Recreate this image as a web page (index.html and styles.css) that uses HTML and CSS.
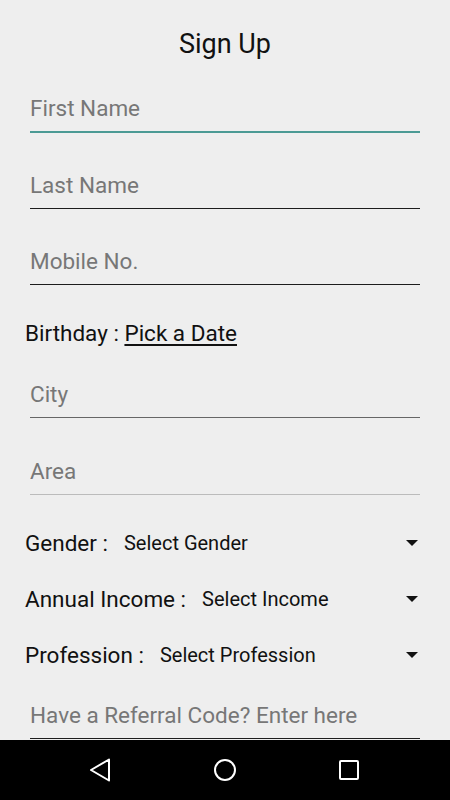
FILE: index.html
```html
<!DOCTYPE html>
<html lang="en">
<head>
  <meta charset="UTF-8">
  <title>Sign Up</title>
  <link rel="stylesheet" href="styles.css">
</head>
<body>

<div class="screen">
  <form class="form" id="signupForm">
    <h2 class="title">Sign Up</h2>

    <input type="text" class="field field-active" placeholder="First Name">
    <input type="text" class="field" placeholder="Last Name">
    <input type="tel" class="field" placeholder="Mobile No.">

    <div class="birthday">
      Birthday : <a href="#" class="date-link">Pick a Date</a>
    </div>

    <input type="text" class="field field-city" placeholder="City">
    <input type="text" class="field field-area" placeholder="Area">

    <div class="spinner-row">
      <span class="spinner-label">Gender :</span>
      <span class="spinner-value">Select Gender</span>
      <span class="spinner-arrow"></span>
    </div>
    <div class="spinner-row">
      <span class="spinner-label">Annual Income :</span>
      <span class="spinner-value">Select Income</span>
      <span class="spinner-arrow"></span>
    </div>
    <div class="spinner-row">
      <span class="spinner-label">Profession :</span>
      <span class="spinner-value">Select Profession</span>
      <span class="spinner-arrow"></span>
    </div>

    <input type="text" class="field field-referral" placeholder="Have a Referral Code? Enter here">
  </form>

  <div class="navbar">
    <svg width="24" height="26" viewBox="0 0 24 26">
      <path d="M21 2.5 L3 13 L21 23.5 Z" fill="none" stroke="#fff" stroke-width="2" stroke-linejoin="round"/>
    </svg>
    <svg width="24" height="24" viewBox="0 0 24 24">
      <circle cx="12" cy="12" r="10" fill="none" stroke="#fff" stroke-width="2"/>
    </svg>
    <svg width="24" height="24" viewBox="0 0 24 24">
      <rect x="3" y="3" width="18" height="18" rx="1" fill="none" stroke="#fff" stroke-width="2"/>
    </svg>
  </div>
</div>

</body>
</html>
```

FILE: styles.css
```css
html, body {
  margin: 0;
  padding: 0;
}

body {
  font-family: Roboto, "Noto Sans", sans-serif;
  background: #eeeeee;
}

.screen {
  display: flex;
  flex-direction: column;
  height: 800px;
  overflow: hidden;
}

.form {
  flex: 1;
  overflow: hidden;
  display: flex;
  flex-direction: column;
}

.title {
  margin: 24px 0 0;
  height: 40px;
  line-height: 40px;
  text-align: center;
  font-size: 27px;
  font-weight: 400;
  color: #111;
}

.field {
  display: block;
  box-sizing: border-box;
  margin: 24px 30px 0;
  width: 390px;
  height: 44px;
  padding: 0 0 3px;
  line-height: 40px;
  border: none;
  border-bottom: 1px solid #1c1c1c;
  background: transparent;
  font-family: Roboto, "Noto Sans", sans-serif;
  font-size: 22.5px;
  color: #111;
  outline: none;
}

.field::placeholder {
  color: #777;
}

.field-active {
  border-bottom: 2px solid #4b9a94;
  height: 45px;
}

.field + .field {
  margin-top: 32px;
}

.field-city {
  margin-top: 26px;
  border-bottom-color: #666;
}

.field + .field-area {
  margin-top: 33px;
  border-bottom-color: #bbb;
}

.birthday {
  margin: 33px 25px 0;
  height: 30px;
  line-height: 30px;
  font-size: 22.5px;
  color: #111;
}

.date-link {
  color: #111;
  text-decoration: underline;
  text-underline-offset: 3px;
}

.spinner-row {
  display: flex;
  align-items: center;
  height: 40px;
  margin: 16px 32px 0 25px;
  color: #111;
}

.field-area + .spinner-row {
  margin-top: 28px;
}

.spinner-label {
  font-size: 22.5px;
}

.spinner-value {
  margin-left: 16px;
  font-size: 20px;
  flex: 1;
}

.spinner-arrow {
  width: 0;
  height: 0;
  border-left: 6px solid transparent;
  border-right: 6px solid transparent;
  border-top: 6px solid #111;
}

.field-referral {
  margin-top: 20px;
}

.navbar {
  height: 60px;
  background: #000;
  display: flex;
  align-items: center;
  justify-content: space-between;
  padding: 0 89px 0 88px;
}
```
